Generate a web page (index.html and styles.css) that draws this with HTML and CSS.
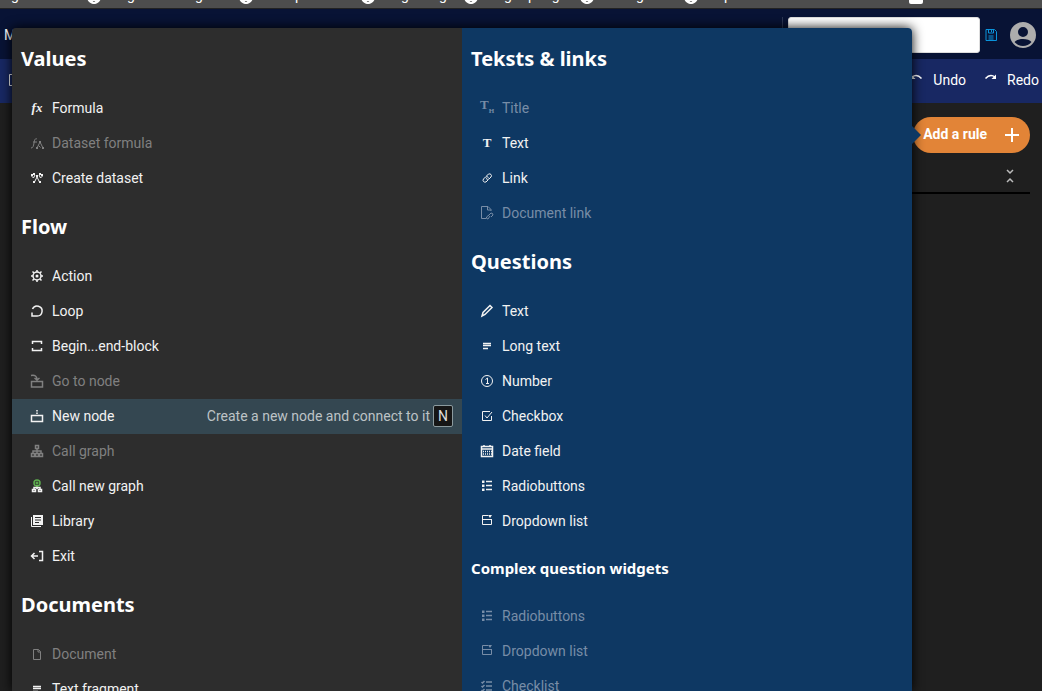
FILE: index.html
```html
<!DOCTYPE html>
<html lang="en">
<head>
    <meta charset="UTF-8">
    <meta name="viewport" content="width=device-width, initial-scale=1.0">
    <title>Add a rule</title>
    <link rel="stylesheet" href="styles.css">
</head>
<body>

    <!-- shared icons -->
    <svg class="sprite" aria-hidden="true">
        <symbol id="globe" viewBox="0 0 14 14"><circle cx="7" cy="7" r="6"/><ellipse cx="7" cy="7" rx="3" ry="6"/><path d="M1 7h12M2 10h10"/></symbol>
        <symbol id="radio" viewBox="0 0 14 14"><path d="M6 2.500h6M6 6.500h6M6 10.500h6"/><path class="solid" d="M2 1.500h2.500v2.500H2zM2 5.500h2.500V8H2zM2 9.500h2.500V12H2z"/></symbol>
        <symbol id="dropdown" viewBox="0 0 14 14"><path d="M8 1.500H2.500v9h9V5M2.500 5.500h9"/><path class="solid" d="M8 1h4l-2 3z"/></symbol>
        <symbol id="lines" viewBox="0 0 14 14"><path d="M3 4.500h8M3 6.500h8M3 9.500h5"/></symbol>
    </svg>

    <div class="bookmarks">
        <span>g</span>
        <span><svg class="globe"><use href="#globe"/></svg>g<i></i><i></i>g</span>
        <span><svg class="globe"><use href="#globe"/></svg><b></b>p</span>
        <span><svg class="globe"><use href="#globe"/></svg>g<i></i>g</span>
        <span><svg class="globe"><use href="#globe"/></svg>g<b></b>p<b></b>g</span>
        <span><svg class="globe"><use href="#globe"/></svg><b></b>g</span>
        <span><svg class="globe"><use href="#globe"/></svg>p</span>
        <span><em></em></span>
    </div>

    <header class="header">
        <span class="brand">M</span>
        <svg class="help" viewBox="0 0 14 14"><circle cx="7" cy="7" r="6"/></svg>
        <div class="account">
            <input type="text" class="search" aria-label="Search">
            <button type="button" class="plain" aria-label="Save">
                <svg class="save" viewBox="0 0 14 14"><path d="M2 1.500h8.500l2 2v9H2zM4.500 2v3h5V2M7.500 2v2M4.500 8h5M4.500 10h5M4.500 12h5"/></svg>
            </button>
            <button type="button" class="plain" aria-label="Account">
                <svg class="avatar" viewBox="0 0 26 26"><path fill-rule="evenodd" d="M13 0a13 13 0 1 0 0 26 13 13 0 0 0 0-26zM13 5a5 5 0 1 1 0 10 5 5 0 0 1 0-10zM13 17c4 0 7 1 8.500 3a11 11 0 0 1-17 0c1.500-2 4.500-3 8.500-3z"/></svg>
            </button>
        </div>
    </header>

    <nav class="toolbar">
        <svg class="icon" viewBox="0 0 14 14"><path d="M1.500 1.500h9v11h-9z"/></svg>
        <div class="history">
            <button type="button" class="plain"><svg class="icon bold" viewBox="0 0 14 14"><path d="M2 4Q7 .5 11.500 5.500"/><path class="solid" d="M1 1.500V6h4.500z"/></svg>Undo</button>
            <button type="button" class="plain"><svg class="icon bold" viewBox="0 0 14 14"><path d="M11 4Q6 .5 1.500 5.500"/><path class="solid" d="M12 1.500V6H7.500z"/></svg>Redo</button>
        </div>
    </nav>

    <main class="workspace">
        <button type="button" class="add-rule">Add a rule
            <svg class="plus" viewBox="0 0 14 14"><path d="M7 0v14M0 7h14"/></svg>
        </button>
        <div class="panel-head">
            <button type="button" class="plain" aria-label="Collapse"><svg class="icon bold" viewBox="0 0 14 14"><path d="M4 1l3 3 3-3M4 13l3-3 3 3"/></svg></button>
        </div>
    </main>

    <div class="menu">
        <section class="column">
            <h2>Values</h2>
            <button type="button" class="item"><span class="glyph formula">fx</span>Formula</button>
            <button type="button" class="item" disabled><svg class="icon" viewBox="0 0 14 14"><path d="M1 12c2 0 2.500-2 3-5s1-5 3-4M3 6h4M7 12l3-6 3 6M8.500 9.500l2 2"/><path class="solid" d="M9 5h2v2H9zM6 11h2v2H6zM12 11h2v2h-2z"/></svg>Dataset formula</button>
            <button type="button" class="item"><svg class="icon" viewBox="0 0 14 14"><path d="M1.500 5l2 2L5 4M12.500 5l-2 2L9 4M7 6l-2.500 5M7 6l2.500 5"/><path class="solid" d="M1 3h2v2H1zM3 2h2v2H3zM11 3h2v2h-2zM9 2h2v2H9zM6 4h2v2H6zM3 10h2v2H3zM9 10h2v2H9z"/></svg>Create dataset</button>

            <h2>Flow</h2>
            <button type="button" class="item"><svg class="icon bold" viewBox="0 0 14 14"><circle cx="7" cy="7" r="4"/><circle class="solid" cx="7" cy="7" r="1.500"/><path d="M7 1v2M7 11v2M1 7h2M11 7h2M2.500 2.500L4 4M10 10l1.500 1.500M2.500 11.500L4 10M10 4l1.500-1.500"/></svg>Action</button>
            <button type="button" class="item"><svg class="icon bold" viewBox="0 0 14 14"><path d="M2.500 5A5 5 0 1 1 7 12H3M2 8.500v3.500h4"/></svg>Loop</button>
            <button type="button" class="item"><svg class="icon bold" viewBox="0 0 14 14"><path d="M2.500 5V2.500h9V5M2.500 9v2.500h9V9"/></svg>Begin...end-block</button>
            <button type="button" class="item" disabled><svg class="icon bold" viewBox="0 0 14 14"><path d="M1.500 7.500h11v5.500h-11zM1 1.500c4-1 6 1 6 4M4.500 4L7 6l2.500-2"/></svg>Go to node</button>
            <button type="button" class="item active"><svg class="icon bold" viewBox="0 0 14 14"><path d="M1.500 6.500h11v6h-11zM7 1v1.500M7 3.500V5"/></svg>New node<span class="hint">Create a new node and connect to it<kbd>N</kbd></span></button>
            <button type="button" class="item" disabled><svg class="icon bold" viewBox="0 0 14 14"><path d="M5.500 1.500h3v3h-3zM1.500 9.500h3v3h-3zM5.500 9.500h3v3h-3zM9.500 9.500h3v3h-3zM7 5v4M3 9V7h8v2"/></svg>Call graph</button>
            <button type="button" class="item"><svg class="icon bold" viewBox="0 0 14 14"><path d="M7 6v4M4 10V8.500h6V10M2.500 10.500h3v2h-3zM8.500 10.500h3v2h-3z"/><g class="green"><circle cx="7" cy="4" r="3"/><path d="M5.500 4h3M7 2.500v3"/></g></svg>Call new graph</button>
            <button type="button" class="item"><svg class="icon" viewBox="0 0 14 14"><path d="M1.500 3v9.500H11"/><path class="solid" fill-rule="evenodd" d="M3 1h10v10H3zM5 3v1h6V3zM5 5.500v1h6v-1zM5 8v1h4V8z"/></svg>Library</button>
            <button type="button" class="item"><svg class="icon bold" viewBox="0 0 14 14"><path d="M8 7H1.500M4.500 4l-3 3 3 3M9 2.500h3.500v9H9"/></svg>Exit</button>

            <h2>Documents</h2>
            <button type="button" class="item" disabled><svg class="icon" viewBox="0 0 14 14"><path d="M3.500 2.500h5l2 2v8h-7zM8 2.500V5h2.500"/></svg>Document</button>
            <button type="button" class="item"><svg class="icon bold"><use href="#lines"/></svg>Text fragment</button>
        </section>

        <section class="column blue">
            <h2>Teksts &amp; links</h2>
            <button type="button" class="item" disabled><span class="glyph">T<small>H</small></span>Title</button>
            <button type="button" class="item"><span class="glyph">T</span>Text</button>
            <button type="button" class="item"><svg class="icon" viewBox="0 0 14 14"><path d="M6.500 5l2-2q1.500-.5 2.500.5t0 2.500L9 8Q7.500 9 6 7.500M8 9l-2 2q-1.500.5-2.500-.5t0-2.500l2-2q1.500-1 3 .5"/></svg>Link</button>
            <button type="button" class="item" disabled><svg class="icon" viewBox="0 0 14 14"><path d="M6 12.500H1.500v-12H8l3 3V5M7.500 1v3H11M9 9l2-2q2 0 2 2l-2 2M10 10l-2 3q-2 0-1.500-2L9 9"/></svg>Document link</button>

            <h2>Questions</h2>
            <button type="button" class="item"><svg class="icon bold" viewBox="0 0 14 14"><path d="M2 12l1-3.500 7-7 2 2-7 7z"/></svg>Text</button>
            <button type="button" class="item"><svg class="icon bold"><use href="#lines"/></svg>Long text</button>
            <button type="button" class="item"><svg class="icon" viewBox="0 0 14 14"><circle cx="7" cy="7" r="5.500"/><path d="M5.500 5.500L7.500 4v6M6 9.500h3"/></svg>Number</button>
            <button type="button" class="item"><svg class="icon" viewBox="0 0 14 14"><path d="M10 2.500H2.500v9h9V7M5 6.500L7 9l5-6"/></svg>Checkbox</button>
            <button type="button" class="item"><svg class="icon bold" viewBox="0 0 14 14"><path d="M1.500 2.500h11v10h-11zM1.500 5h11M4 1v2M10 1v2"/><path class="dots" d="M3 7.500h9M3 10h9"/></svg>Date field</button>
            <button type="button" class="item"><svg class="icon bold"><use href="#radio"/></svg>Radiobuttons</button>
            <button type="button" class="item"><svg class="icon"><use href="#dropdown"/></svg>Dropdown list</button>

            <h3>Complex question widgets</h3>
            <button type="button" class="item" disabled><svg class="icon bold"><use href="#radio"/></svg>Radiobuttons</button>
            <button type="button" class="item" disabled><svg class="icon"><use href="#dropdown"/></svg>Dropdown list</button>
            <button type="button" class="item" disabled><svg class="icon bold" viewBox="0 0 14 14"><path d="M6 3h6M6 7h6M6 11h6M1.500 3l1 1L4.500 2M1.500 7l1 1 2-2M1.500 11l1 1 2-2"/></svg>Checklist</button>
        </section>
    </div>

</body>
</html>
```
FILE: styles.css
```css
* {
    box-sizing: border-box;
}

body {
    position: relative;
    display: flex;
    flex-direction: column;
    height: 100vh;
    margin: 0;
    overflow: hidden;
    background-color: #1f1f1f;
    color: #fff;
    font-family: Roboto, "Liberation Sans", sans-serif;
    font-size: 14px;
    line-height: 20px;
}

button {
    font: inherit;
    color: inherit;
    text-align: left;
}

svg {
    flex: none;
    fill: none;
    stroke: currentColor;
}

.sprite {
    position: absolute;
    width: 0;
    height: 0;
}

.solid {
    fill: currentColor;
    stroke: none;
}

/* bookmarks bar, only its lower edge is in view */
.bookmarks {
    display: grid;
    grid-template-columns: 76px 152px 122px 103px 116px 104px 215px 1fr;
    align-content: end;
    align-items: end;
    height: 9px;
    padding: 0 0 4px 11px;
    overflow: hidden;
    background-color: #4d4d4d;
    border-bottom: 1px solid #222;
}

.bookmarks span {
    display: flex;
    align-items: end;
    line-height: 18px;
}

.bookmarks i {
    width: 30px;
}

.bookmarks b {
    width: 16px;
}

.bookmarks em {
    width: 14px;
    height: 10px;
    margin-left: 10px;
    border-radius: 2px;
    background-color: #fff;
}

.globe {
    width: 14px;
    height: 14px;
    margin-right: 26px;
    stroke-width: 2;
}

.header {
    display: flex;
    align-items: center;
    height: 50px;
    padding: 2px 6px 0 4px;
    background-color: #081335;
}

.help {
    width: 14px;
    height: 14px;
    margin-left: 75px;
}

.account {
    display: flex;
    align-items: center;
    gap: 4px;
    height: 36px;
    margin-left: auto;
    padding-left: 5px;
    border-left: 1px solid #2c3654;
}

.search {
    width: 192px;
    height: 36px;
    border: 1px solid #ddd;
    border-radius: 3px;
    background-color: #fff;
}

.plain {
    display: flex;
    align-items: center;
    gap: 9px;
    padding: 0;
    border: none;
    background: none;
    cursor: pointer;
}

.save {
    width: 14px;
    height: 14px;
    color: #0a94dc;
}

.avatar {
    width: 26px;
    height: 26px;
    margin-left: 8px;
    fill: #adadad;
    stroke: none;
}

.toolbar {
    display: flex;
    align-items: center;
    justify-content: space-between;
    height: 44px;
    padding: 0 3px 2px 8px;
    background-color: #182863;
}

.history {
    display: flex;
    gap: 18px;
}

.icon {
    width: 14px;
    height: 14px;
}

.bold {
    stroke-width: 1.5;
}

.workspace {
    display: flex;
    flex-direction: column;
    align-items: flex-end;
    flex: 1;
    padding: 14px 12px 0;
}

.add-rule {
    display: flex;
    align-items: center;
    gap: 18px;
    height: 36px;
    padding: 0 11px 2px 10px;
    border: none;
    border-radius: 18px;
    background-color: #e28437;
    font-weight: bold;
    cursor: pointer;
}

.plus {
    width: 14px;
    height: 14px;
    margin-top: 2px;
    stroke-width: 2;
}

.panel-head {
    display: flex;
    align-items: center;
    justify-content: flex-end;
    width: 100%;
    height: 41px;
    padding: 6px 13px 0 0;
    border-bottom: 2px solid #000;
    color: #bbb;
}

/* rule picker, opens over the page */
.menu {
    position: absolute;
    top: 28px;
    right: 130px;
    bottom: 0;
    left: 12px;
    display: grid;
    grid-template-columns: 1fr 1fr;
    border-radius: 4px 4px 0 0;
    box-shadow: 0 0 12px #000;
}

.menu::after {
    content: "";
    position: absolute;
    top: 98px;
    left: 100%;
    border: 9px solid transparent;
    border-left-color: #0e3863;
    border-right-width: 0;
}

.column {
    overflow: hidden;
    border-top-left-radius: 4px;
    background-color: #2d2d2d;
}

.blue {
    border-radius: 0 4px 0 0;
    background-color: #0e3863;
}

h2,
h3 {
    margin: 0;
    padding: 0 9px;
    font-family: "Noto Sans", sans-serif;
    font-weight: bold;
}

h2 {
    height: 63px;
    font-size: 20px;
    line-height: 62px;
}

h3 {
    height: 60px;
    font-size: 15px;
    line-height: 58px;
}

.item {
    display: flex;
    align-items: center;
    gap: 8px;
    width: 100%;
    height: 35px;
    padding: 0 9px 2px 18px;
    border: none;
    background: none;
    color: #f2f2f2;
    cursor: pointer;
}

.item:disabled {
    color: #808080;
    cursor: default;
}

.blue .item:disabled {
    color: #788da7;
}

.item.active {
    background-color: #344751;
}

.glyph {
    width: 14px;
    font-family: "Liberation Serif", serif;
    font-size: 13px;
    font-weight: bold;
    text-align: center;
    white-space: nowrap;
}

.glyph small {
    font-size: 7px;
    vertical-align: sub;
}

.formula {
    font-style: italic;
}

.hint {
    display: flex;
    align-items: center;
    gap: 3px;
    margin-left: auto;
    color: #bdc3c6;
}

kbd {
    padding: 0 4px;
    border: 1px solid #8b9a9e;
    border-radius: 2px;
    background-color: #161616;
    font-family: inherit;
    color: #ddd;
}

.green {
    color: #5fb04f;
    stroke: #5fb04f;
}

.dots {
    stroke-dasharray: 1 1;
}
```
